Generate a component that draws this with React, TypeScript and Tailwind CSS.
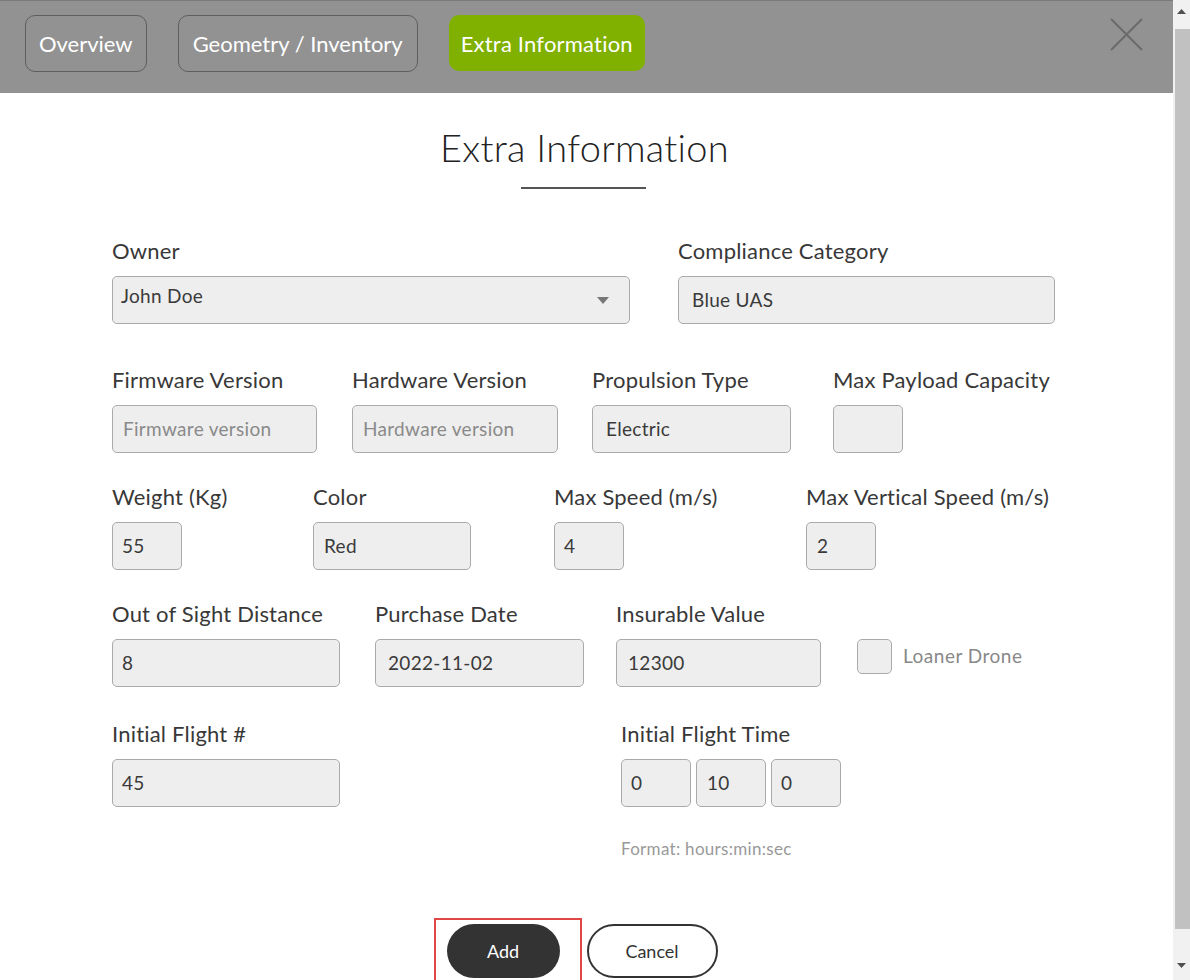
import React from "react";

const font = { fontFamily: "Lato, 'Noto Sans', sans-serif" };

function Label({ children }: { children: React.ReactNode }) {
  return (
    <div className="text-[22px] leading-[24px] tracking-[0.2px] text-[#383838] mb-[13px] whitespace-nowrap">
      {children}
    </div>
  );
}

function Input({
  w,
  value,
  placeholder,
  pl = "pl-[12px]",
}: {
  w: string;
  value?: string;
  placeholder?: string;
  pl?: string;
}) {
  return (
    <div
      className={`${w} ${pl} h-[48px] bg-[#eeeeee] border border-[#aaaaaa] rounded-[5px] flex items-center text-[19px] tracking-[0.3px] ${
        value ? "text-[#3a3a3a]" : "text-[#8a8a8a]"
      }`}
    >
      {value ?? placeholder}
    </div>
  );
}

export default function App() {
  return (
    <div className="w-[1190px] h-[980px] overflow-hidden flex bg-white" style={font}>
      <div className="flex-1 flex flex-col">
        <div className="relative h-[93px] bg-[#929292] border-t border-[#7a7a7a] flex items-start pt-[14px] pl-[25px] gap-[31px]">
          <div className="h-[57px] px-[13px] rounded-[10px] border border-[#5e5e5e] flex items-center text-white text-[22px]">
            Overview
          </div>
          <div className="h-[57px] px-[14px] rounded-[10px] border border-[#5e5e5e] flex items-center text-white text-[22px]">
            Geometry / Inventory
          </div>
          <div className="h-[56px] px-[12px] rounded-[10px] bg-[#80b000] flex items-center text-white text-[22px] tracking-[0.2px]">
            Extra Information
          </div>
          <svg className="absolute left-[1110px] top-[17px]" width="33" height="33" viewBox="0 0 33 33">
            <path d="M1 1 L32 32 M32 1 L1 32" stroke="#6b6b6b" strokeWidth="2" />
          </svg>
        </div>

        <div className="flex flex-col items-center">
          <div className="mt-[31px] text-[38px] leading-[46px] text-[#222] font-light tracking-[0.3px] pr-[4px]">
            Extra Information
          </div>
          <div className="mt-[17px] w-[125px] h-[2px] bg-[#555] mr-[6px]" />
        </div>

        <div className="ml-[112px] w-[943px] flex flex-col">
          {/* Row 1 */}
          <div className="mt-[50px] flex">
            <div className="w-[566px]">
              <Label>Owner</Label>
              <div className="w-[518px] h-[48px] bg-[#eeeeee] border border-[#aaaaaa] rounded-[5px] flex items-center justify-between pl-[8px] pr-[20px] text-[19px] tracking-[0.3px] text-[#3a3a3a]">
                <span className="-mt-[8px]">John Doe</span>
                <svg width="12" height="7" viewBox="0 0 12 7">
                  <path d="M0 0 L12 0 L6 7 Z" fill="#777" />
                </svg>
              </div>
            </div>
            <div className="flex-1">
              <Label>Compliance Category</Label>
              <Input w="w-[377px]" value="Blue UAS" pl="pl-[13px]" />
            </div>
          </div>

          {/* Row 2 */}
          <div className="mt-[44px] flex">
            <div className="w-[240px]">
              <Label>Firmware Version</Label>
              <Input w="w-[205px]" placeholder="Firmware version" pl="pl-[10px]" />
            </div>
            <div className="w-[240px]">
              <Label>Hardware Version</Label>
              <Input w="w-[206px]" placeholder="Hardware version" pl="pl-[10px]" />
            </div>
            <div className="w-[241px]">
              <Label>Propulsion Type</Label>
              <Input w="w-[199px]" value="Electric" pl="pl-[13px]" />
            </div>
            <div className="flex-1">
              <Label>Max Payload Capacity</Label>
              <Input w="w-[70px]" />
            </div>
          </div>

          {/* Row 3 */}
          <div className="mt-[32px] flex">
            <div className="w-[201px]">
              <Label>Weight (Kg)</Label>
              <Input w="w-[70px]" value="55" pl="pl-[9px]" />
            </div>
            <div className="w-[241px]">
              <Label>Color</Label>
              <Input w="w-[158px]" value="Red" pl="pl-[10px]" />
            </div>
            <div className="w-[252px]">
              <Label>Max Speed (m/s)</Label>
              <Input w="w-[70px]" value="4" pl="pl-[9px]" />
            </div>
            <div className="flex-1">
              <Label>Max Vertical Speed (m/s)</Label>
              <Input w="w-[70px]" value="2" pl="pl-[10px]" />
            </div>
          </div>

          {/* Row 4 */}
          <div className="mt-[32px] flex">
            <div className="w-[263px]">
              <Label>Out of Sight Distance</Label>
              <Input w="w-[228px]" value="8" pl="pl-[9px]" />
            </div>
            <div className="w-[241px]">
              <Label>Purchase Date</Label>
              <Input w="w-[209px]" value="2022-11-02" pl="pl-[12px]" />
            </div>
            <div className="w-[241px]">
              <Label>Insurable Value</Label>
              <Input w="w-[205px]" value="12300" pl="pl-[11px]" />
            </div>
            <div className="flex-1 pt-[37px]">
              <div className="flex items-center gap-[11px]">
                <div className="w-[35px] h-[35px] bg-[#eeeeee] border border-[#aaaaaa] rounded-[5px]" />
                <span className="text-[19px] tracking-[0.5px] text-[#888]">Loaner Drone</span>
              </div>
            </div>
          </div>

          {/* Row 5 */}
          <div className="mt-[35px] flex">
            <div className="w-[509px]">
              <Label>Initial Flight #</Label>
              <Input w="w-[228px]" value="45" pl="pl-[9px]" />
            </div>
            <div className="flex-1">
              <Label>Initial Flight Time</Label>
              <div className="flex gap-[5px]">
                <Input w="w-[70px]" value="0" pl="pl-[9px]" />
                <Input w="w-[70px]" value="10" pl="pl-[10px]" />
                <Input w="w-[70px]" value="0" pl="pl-[9px]" />
              </div>
              <div className="mt-[31px] text-[17px] leading-[22px] tracking-[0.3px] text-[#999]">
                Format: hours:min:sec
              </div>
            </div>
          </div>
        </div>

        <div className="mt-[64px] flex justify-center gap-[27px] pr-[9px]">
          <div className="relative">
            <div className="w-[113px] h-[54px] rounded-full bg-[#333] text-white text-[18px] flex items-center justify-center">
              Add
            </div>
            <div className="absolute -left-[13px] -top-[6px] w-[148px] h-[70px] border-2 border-[#e04848]" />
          </div>
          <div className="w-[131px] h-[54px] rounded-full border-2 border-[#333] bg-white text-[#333] text-[18px] flex items-center justify-center">
            Cancel
          </div>
        </div>
      </div>

      <div className="w-[17px] h-full bg-[#f1f1f1] flex flex-col items-center">
        <svg className="mt-[9px]" width="9" height="5" viewBox="0 0 9 5">
          <path d="M0 5 L9 5 L4.5 0 Z" fill="#505050" />
        </svg>
        <div className="mt-[15px] ml-[2px] w-[15px] h-[900px] bg-[#c1c1c1]" />
        <svg className="mt-[34px]" width="9" height="5" viewBox="0 0 9 5">
          <path d="M0 0 L9 0 L4.5 5 Z" fill="#505050" />
        </svg>
      </div>
    </div>
  );
}
